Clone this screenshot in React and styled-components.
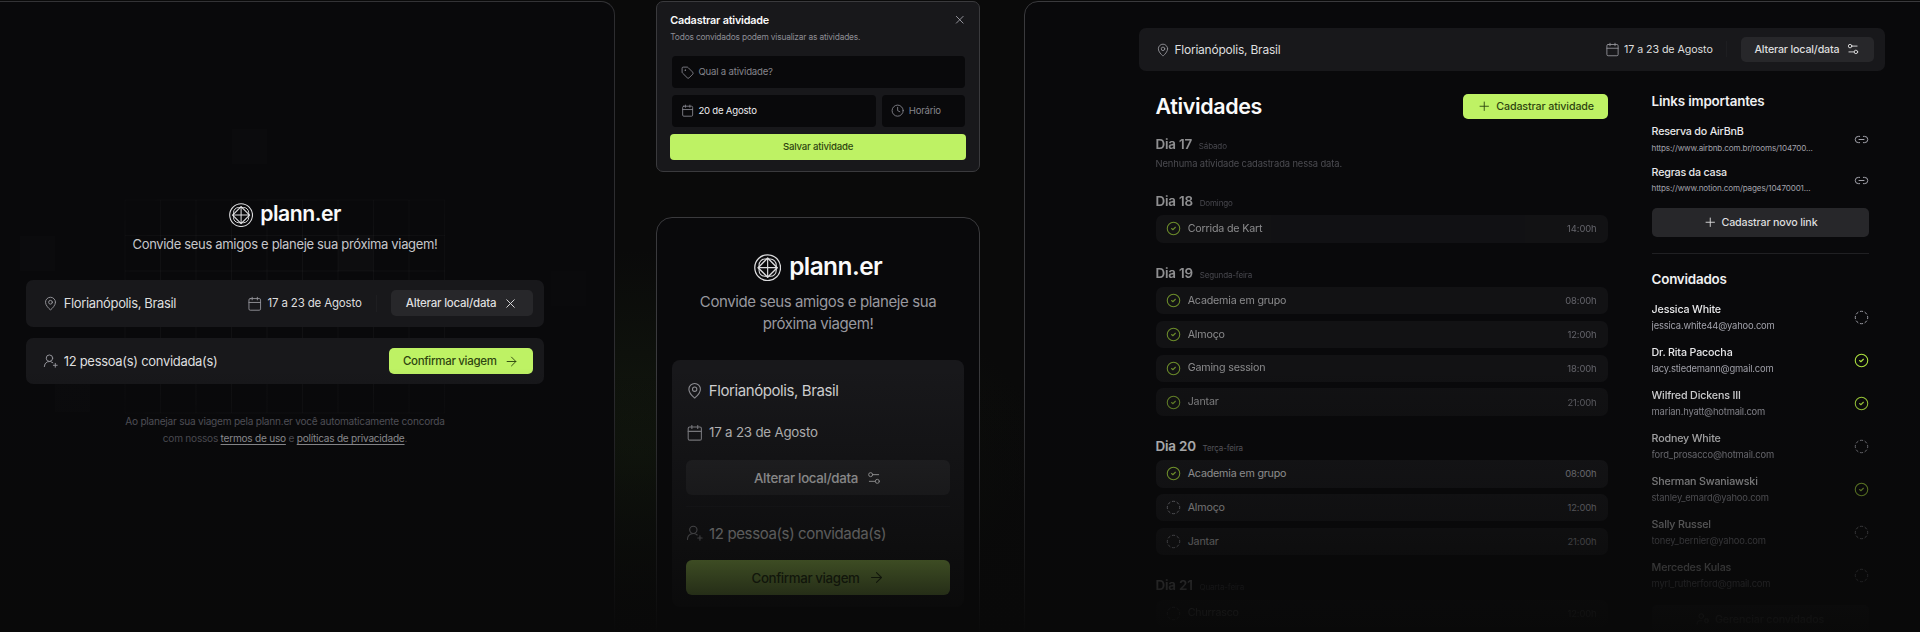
import React from "react";
import styled, { createGlobalStyle, css } from "styled-components";
import {
  ArrowRight,
  Calendar,
  CircleCheck,
  CircleDashed,
  Clock,
  Link2,
  MapPin,
  Plus,
  Settings2,
  Tag,
  UserRoundPlus,
  UserCog,
  X,
} from "lucide-react";

const GlobalStyle = createGlobalStyle`
  * { box-sizing: border-box; }
  body {
    margin: 0;
    background: #0a0a0a;
    font-family: Inter, "Liberation Sans", sans-serif;
    color: #e8e8ea;
    overflow: hidden;
  }
  h1, h2, h3, p { margin: 0; }
  svg { flex: none; display: block; }
`;

/* ---------- shared ---------- */

const type = css`
  font-size: ${(p) => p.$size}px;
  letter-spacing: ${(p) => p.$track ?? -0.02}em;
  white-space: nowrap;
`;

const Page = styled.main`
  position: relative;
  display: flex;
  align-items: flex-start;
  width: 1920px;
  height: 632px;
  overflow: hidden;
  background: radial-gradient(ellipse 400px 205px at 640px 455px, #12180e, #0a0a0a 100%);
`;

const BottomFade = styled.div`
  position: absolute;
  left: 0;
  right: 0;
  top: 368px;
  bottom: 0;
  background: linear-gradient(rgba(9, 9, 9, 0), rgba(9, 9, 9, 0.98));
  pointer-events: none;
`;

const Label = styled.span`
  ${type}
  line-height: 1.3;
  color: ${(p) => p.$color || "#dededf"};
`;

const Field = styled.div`
  display: flex;
  align-items: center;
  gap: ${(p) => p.$gap || 5.5}px;
  color: ${(p) => p.$color || "#96969c"};
`;

const Button = styled.button`
  ${type}
  display: flex;
  align-items: center;
  justify-content: center;
  gap: ${(p) => p.$gap || 7}px;
  height: ${(p) => p.$h}px;
  width: ${(p) => (p.$w ? `${p.$w}px` : "100%")};
  padding: 0;
  border: 0;
  border-radius: ${(p) => p.$radius || 5}px;
  font-family: inherit;
  font-weight: 500;
  background: ${(p) => (p.$primary ? "#bef264" : "#27272a")};
  color: ${(p) => (p.$primary ? "#2e4510" : "#dededf")};
  opacity: ${(p) => (p.$faint ? 0.55 : 1)};
`;

const Split = styled.i`
  width: 1px;
  height: ${(p) => p.$h}px;
  background: #1e1e21;
`;

const Rule = styled.hr`
  width: 100%;
  height: 1px;
  border: 0;
  margin: ${(p) => p.$margin};
  background: ${(p) => p.$color || "#202023"};
`;

/* ---------- brand ---------- */

const BrandRow = styled.div`
  display: flex;
  align-items: center;
  gap: ${(p) => p.$gap}px;
  height: ${(p) => p.$h}px;
`;

const BrandName = styled.h1`
  ${type}
  font-weight: 600;
  line-height: 1;
  margin-bottom: 4px;
  color: #fafafa;
`;

function Brand({ mark, size, gap }) {
  return (
    <BrandRow $gap={gap} $h={mark}>
      <svg width={mark} height={mark} viewBox="0 0 28 28" fill="none" stroke="#dcdcde">
        <circle cx="14" cy="14" r="13.2" strokeWidth="1.3" />
        <rect x="5.2" y="5.2" width="17.6" height="17.6" rx="6" strokeWidth="1.1" />
        <path d="M14 4.2 23.8 14 14 23.8 4.2 14Z" strokeWidth="1.4" strokeLinejoin="round" />
        <path d="M14 4v20M4 14h20" strokeWidth="1.2" />
      </svg>
      <BrandName $size={size} $track={-0.022}>plann.er</BrandName>
    </BrandRow>
  );
}

/* ---------- invite screen ---------- */

const InvitePanel = styled.section`
  position: relative;
  flex: none;
  width: 615px;
  height: 700px;
  margin-top: 1px;
  padding: 201px 70px 0 26px;
  border: 1px solid #2d2d30;
  border-left: 0;
  border-top-color: #333336;
  border-radius: 0 14px 0 0;
  background: #09090b;
`;

const GridArt = styled.svg`
  position: absolute;
  left: 0;
  top: 98px;
`;

const InviteContent = styled.div`
  position: relative;
  display: flex;
  flex-direction: column;
  align-items: center;
`;

const Tagline = styled.p`
  ${type}
  line-height: ${(p) => p.$lh}px;
  margin: ${(p) => p.$margin};
  color: ${(p) => p.$color};
  text-align: center;
`;

const Bar = styled.div`
  display: flex;
  align-items: center;
  width: 100%;
  height: ${(p) => p.$h}px;
  padding: ${(p) => p.$pad};
  border-radius: 7px;
  background: #18181b;
`;

const BarEnd = styled.div`
  display: flex;
  align-items: center;
  gap: ${(p) => p.$gap || 14}px;
  margin-left: auto;
`;

const Bars = styled.div`
  display: flex;
  flex-direction: column;
  gap: 11.3px;
  width: 518.5px;
`;

const Terms = styled.p`
  ${type}
  margin-top: 29px;
  line-height: 16.2px;
  text-align: center;
  color: #5f5f67;
`;

const TermsLink = styled.a`
  color: #b4b4b9;
  text-decoration: underline;
  text-underline-offset: 1.5px;
`;

const cells = [
  [231.5, 29, 0.6],
  [480, 65, 0.25],
  [19.5, 135.5, 0.5],
  [338, 135.5, 1],
  [551, 171, 0.4],
  [55, 277, 0.6],
];

function GridBackdrop() {
  const xs = Array.from({ length: 10 }, (_, i) => 125 + i * 35.5);
  const ys = Array.from({ length: 7 }, (_, i) => 100 + i * 35.5);
  return (
    <GridArt width="614" height="420" viewBox="0 0 614 420">
      <defs>
        <radialGradient id="gridFade" cx="0.46" cy="0.5" r="0.5">
          <stop offset="0" stopColor="#fff" />
          <stop offset="0.5" stopColor="#fff" stopOpacity="0.75" />
          <stop offset="1" stopColor="#fff" stopOpacity="0" />
        </radialGradient>
        <mask id="gridMask">
          <rect width="614" height="420" fill="url(#gridFade)" />
        </mask>
      </defs>
      <g stroke="#fff" strokeOpacity="0.04" mask="url(#gridMask)">
        {xs.map((x) => (
          <path key={x} d={`M${x} 100V313`} />
        ))}
        {ys.map((y) => (
          <path key={y} d={`M125 ${y}H445`} />
        ))}
      </g>
      {cells.map(([x, y, o]) => (
        <rect key={`${x}-${y}`} x={x} y={y} width="35.5" height="35.5" fill="#fff" fillOpacity={0.02 * o} />
      ))}
    </GridArt>
  );
}

function InviteScreen() {
  return (
    <InvitePanel>
      <GridBackdrop />
      <InviteContent>
        <Brand mark={24.2} size={21.2} gap={7} />
        <Tagline $size={13} $track={-0.0254} $lh={20} $margin="7.3px 0 25.7px" $color="#c6c6ca">
          Convide seus amigos e planeje sua próxima viagem!
        </Tagline>
        <Bars>
          <Bar $h={46.5} $pad="0 11.5px 0 17.5px">
            <Field>
              <MapPin size={15} strokeWidth={1.5} />
              <Label $size={13} $track={-0.0275}>Florianópolis, Brasil</Label>
            </Field>
            <BarEnd $gap={14.3}>
              <Field $gap={4.7}>
                <Calendar size={15.5} strokeWidth={1.4} />
                <Label $size={11.5} $track={-0.0146}>17 a 23 de Agosto</Label>
              </Field>
              <Split $h={17} />
              <Button $size={11.5} $h={26} $w={141.5}>
                Alterar local/data
                <X size={15} strokeWidth={1.5} />
              </Button>
            </BarEnd>
          </Bar>
          <Bar $h={46.5} $pad="0 11.5px 0 17.5px">
            <Field $gap={5}>
              <UserRoundPlus size={15.5} strokeWidth={1.5} />
              <Label $size={13} $track={-0.0234}>12 pessoa(s) convidada(s)</Label>
            </Field>
            <BarEnd>
              <Button $primary $size={11.5} $track={-0.0265} $h={26} $w={144}>
                Confirmar viagem
                <ArrowRight size={15} strokeWidth={1.5} />
              </Button>
            </BarEnd>
          </Bar>
        </Bars>
        <Terms $size={10.1} $track={-0.0235}>
          Ao planejar sua viagem pela plann.er você automaticamente concorda
          <br />
          com nossos <TermsLink>termos de uso</TermsLink> e <TermsLink>políticas de privacidade</TermsLink>.
        </Terms>
      </InviteContent>
    </InvitePanel>
  );
}

/* ---------- activity modal and mobile screen ---------- */

const CenterColumn = styled.div`
  flex: none;
  display: flex;
  flex-direction: column;
  gap: 45.7px;
  width: 324px;
  margin: 1px 44px 0 41px;
`;

const Modal = styled.section`
  height: 170.8px;
  padding: 10.2px 13px 0 13.3px;
  border: 1px solid #3a3a3d;
  border-radius: 7px;
  background: #18181b;
`;

const ModalHead = styled.header`
  display: flex;
  align-items: center;
  justify-content: space-between;
  height: 16px;
  color: #a1a1aa;
`;

const ModalTitle = styled.h2`
  ${type}
  font-weight: 600;
  color: #fafafa;
`;

const ModalNote = styled.p`
  ${type}
  line-height: 14px;
  margin: 2px 0 12.2px;
  color: #8d8d94;
`;

const InputRow = styled.div`
  display: flex;
  gap: 6.7px;
  margin: 0 1.5px 7px;
`;

const Input = styled.div`
  display: flex;
  align-items: center;
  gap: 4.3px;
  flex: ${(p) => (p.$w ? "none" : 1)};
  width: ${(p) => (p.$w ? `${p.$w}px` : "auto")};
  height: 31.8px;
  padding: 0 9px;
  border-radius: 4px;
  background: #09090b;
  color: #85858c;
`;

function ActivityModal() {
  return (
    <Modal>
      <ModalHead>
        <ModalTitle $size={10.8} $track={-0.0175}>Cadastrar atividade</ModalTitle>
        <X size={13.5} strokeWidth={1.6} />
      </ModalHead>
      <ModalNote $size={8.4} $track={-0.0217}>Todos convidados podem visualizar as atividades.</ModalNote>
      <InputRow>
        <Input>
          <Tag size={13.3} strokeWidth={1.6} />
          <Label $size={9.6} $color="#85858c">Qual a atividade?</Label>
        </Input>
      </InputRow>
      <InputRow>
        <Input>
          <Calendar size={13.3} strokeWidth={1.6} />
          <Label $size={9.6} $track={-0.0225} $color="#ececee">20 de Agosto</Label>
        </Input>
        <Input $w={82.3}>
          <Clock size={13.3} strokeWidth={1.6} />
          <Label $size={9.6} $track={-0.0256} $color="#85858c">Horário</Label>
        </Input>
      </InputRow>
      <Button $primary $size={9.6} $h={26} $radius={4}>Salvar atividade</Button>
    </Modal>
  );
}

const MobilePanel = styled.section`
  height: 500px;
  padding: 35.7px 15px 0;
  display: flex;
  flex-direction: column;
  align-items: center;
  border: 1px solid #3a3a3d;
  border-radius: 16px;
  background: #09090b;
`;

const MobileCard = styled.div`
  width: 291.5px;
  height: 247px;
  padding: 9.5px 13.7px 0;
  border-radius: 8px;
  background: #18181b;
`;

const MobileRow = styled(Field)`
  height: 42px;
`;

function MobileScreen() {
  return (
    <MobilePanel>
      <Brand mark={27.3} size={24.4} gap={8} />
      <Tagline $size={15} $track={-0.0269} $lh={21.7} $margin="9.4px 0 26px" $color="#98989f">
        Convide seus amigos e planeje sua
        <br />
        próxima viagem!
      </Tagline>
      <MobileCard>
        <MobileRow>
          <MapPin size={17.3} strokeWidth={1.5} />
          <Label $size={15} $track={-0.0271}>Florianópolis, Brasil</Label>
        </MobileRow>
        <MobileRow>
          <Calendar size={17.6} strokeWidth={1.5} />
          <Label $size={13.3} $track={-0.015}>17 a 23 de Agosto</Label>
        </MobileRow>
        <Rule $margin="5.5px 0 0" $color="transparent" />
        <Button $size={13.3} $track={-0.0226} $h={35} $radius={6} $gap={8}>
          Alterar local/data
          <Settings2 size={16} strokeWidth={1.5} />
        </Button>
        <Rule $margin="11px 0 5px" $color="#1f1f22" />
        <MobileRow>
          <UserRoundPlus size={17.6} strokeWidth={1.5} />
          <Label $size={15} $track={-0.0246}>12 pessoa(s) convidada(s)</Label>
        </MobileRow>
        <Rule $margin="5px 0 0" $color="transparent" />
        <Button $primary $size={13.3} $track={-0.0281} $h={35} $radius={6} $gap={8}>
          Confirmar viagem
          <ArrowRight size={17} strokeWidth={1.5} />
        </Button>
      </MobileCard>
    </MobilePanel>
  );
}

/* ---------- trip details screen ---------- */

const TripPanel = styled.section`
  flex: none;
  width: 976px;
  height: 700px;
  margin-top: 1px;
  padding: 26px 0 0 114.2px;
  border: 1px solid #3a3a3d;
  border-radius: 14px;
  background: #09090b;
`;

const TripHeader = styled.div`
  width: 745.6px;
`;

const TripBody = styled.div`
  display: flex;
  gap: 43.2px;
  padding: 0 0 0 16.4px;
`;

const Main = styled.div`
  width: 452.8px;
  padding-top: 22.8px;
`;

const TitleRow = styled.div`
  display: flex;
  align-items: center;
  justify-content: space-between;
  height: 25px;
  margin-bottom: 16.3px;
`;

const Title = styled.h1`
  ${type}
  font-weight: 600;
  line-height: 25px;
  color: #fafafa;
`;

const Day = styled.section`
  margin-bottom: 21.1px;
  opacity: ${(p) => (p.$past ? 0.6 : 1)};
`;

const DayHead = styled.header`
  display: flex;
  align-items: baseline;
  gap: 6.8px;
  height: 18.7px;
  margin-bottom: 4.6px;
  line-height: 18.7px;
`;

const DayName = styled.h2`
  ${type}
  font-weight: 600;
  line-height: 18.7px;
`;

const EmptyNote = styled.p`
  ${type}
  line-height: 12.3px;
  color: #76767e;
`;

const Activities = styled.div`
  display: flex;
  flex-direction: column;
  gap: 6.3px;
`;

const ActivityRow = styled.div`
  display: flex;
  align-items: center;
  gap: 6.7px;
  height: 27.5px;
  padding: 0 11.8px 0 10.4px;
  border-radius: 7px;
  background: #18181b;
`;

const Time = styled.time`
  ${type}
  margin-left: auto;
  color: #a1a1aa;
`;

function Status({ done }) {
  return done ? (
    <CircleCheck size={15} strokeWidth={1.7} color="#aee33f" />
  ) : (
    <CircleDashed size={15} strokeWidth={1.5} color="#a1a1aa" />
  );
}

const days = [
  { name: "Dia 17", weekday: "Sábado", past: true, items: [] },
  { name: "Dia 18", weekday: "Domingo", past: true, items: [["Corrida de Kart", "14:00h", true]] },
  {
    name: "Dia 19",
    weekday: "Segunda-feira",
    past: true,
    items: [
      ["Academia em grupo", "08:00h", true],
      ["Almoço", "12:00h", true],
      ["Gaming session", "18:00h", true],
      ["Jantar", "21:00h", true],
    ],
  },
  {
    name: "Dia 20",
    weekday: "Terça-feira",
    items: [
      ["Academia em grupo", "08:00h", true],
      ["Almoço", "12:00h", false],
      ["Jantar", "21:00h", false],
    ],
  },
  { name: "Dia 21", weekday: "Quarta-feira", past: true, items: [["Churrasco", "12:00h", false]] },
];

const Aside = styled.aside`
  width: 217px;
  padding-top: 21.2px;
`;

const AsideTitle = styled.h2`
  ${type}
  font-weight: 600;
  line-height: 18.7px;
  margin-bottom: 14.4px;
  color: #f0f0f1;
`;

const Entries = styled.div`
  display: flex;
  flex-direction: column;
  gap: ${(p) => p.$gap}px;
  margin-bottom: 13.8px;
  ${(p) => p.$fade && "mask-image: linear-gradient(#000 20%, rgba(0, 0, 0, 0.72));"}
`;

const Entry = styled.div`
  display: flex;
  align-items: center;
  justify-content: space-between;
  height: ${(p) => p.$h}px;
  color: #a1a1aa;
`;

const EntryText = styled.div`
  display: flex;
  flex-direction: column;
  gap: 2.5px;
`;

const EntryName = styled.h3`
  ${type}
  font-weight: 500;
  line-height: 14px;
  color: #e8e8ea;
`;

const EntryDetail = styled.p`
  ${type}
  line-height: ${(p) => p.$lh}px;
  color: #a1a1aa;
`;

const links = [
  ["Reserva do AirBnB", "https://www.airbnb.com.br/rooms/104700..."],
  ["Regras da casa", "https://www.notion.com/pages/10470001..."],
];

const guests = [
  ["Jessica White", "jessica.white44@yahoo.com", false],
  ["Dr. Rita Pacocha", "lacy.stiedemann@gmail.com", true],
  ["Wilfred Dickens III", "marian.hyatt@hotmail.com", true],
  ["Rodney White", "ford_prosacco@hotmail.com", false],
  ["Sherman Swaniawski", "stanley_emard@yahoo.com", true],
  ["Sally Russel", "toney_bernier@yahoo.com", false],
  ["Mercedes Kulas", "myrl_rutherford@gmail.com", false],
];

function TripScreen() {
  return (
    <TripPanel>
      <TripHeader>
        <Bar $h={43} $pad="0 11px 0 16.5px">
          <Field $gap={4.7}>
            <MapPin size={14} strokeWidth={1.5} />
            <Label $size={12} $track={-0.018}>Florianópolis, Brasil</Label>
          </Field>
          <BarEnd $gap={13.7}>
            <Field $gap={4.2}>
              <Calendar size={15} strokeWidth={1.4} />
              <Label $size={10.7} $track={-0.0077}>17 a 23 de Agosto</Label>
            </Field>
            <Split $h={16} />
            <Button $size={10.7} $track={-0.0153} $h={24.8} $w={132.7}>
              Alterar local/data
              <Settings2 size={14} strokeWidth={1.6} />
            </Button>
          </BarEnd>
        </Bar>
      </TripHeader>
      <TripBody>
        <Main>
          <TitleRow>
            <Title $size={21.5} $track={-0.0181}>Atividades</Title>
            <Button $primary $size={10.7} $track={-0.0105} $h={25} $w={145.3} $gap={4.3}>
              <Plus size={14.5} strokeWidth={1.5} />
              Cadastrar atividade
            </Button>
          </TitleRow>
          {days.map((day) => (
            <Day key={day.name} $past={day.past}>
              <DayHead>
                <DayName $size={13.4} $track={-0.0152}>{day.name}</DayName>
                <Label $size={8} $track={-0.016} $color="#71717a">{day.weekday}</Label>
              </DayHead>
              {day.items.length === 0 && (
                <EmptyNote $size={9.4} $track={-0.0131}>Nenhuma atividade cadastrada nessa data.</EmptyNote>
              )}
              <Activities>
                {day.items.map(([name, time, done]) => (
                  <ActivityRow key={name}>
                    <Status done={done} />
                    <Label $size={10.7} $track={-0.017}>{name}</Label>
                    <Time $size={9.4} $track={-0.008}>{time}</Time>
                  </ActivityRow>
                ))}
              </Activities>
            </Day>
          ))}
        </Main>
        <Aside>
          <AsideTitle $size={13.4} $track={-0.0123}>Links importantes</AsideTitle>
          <Entries $gap={11.7}>
            {links.map(([name, url]) => (
              <Entry key={name} $h={28.7}>
                <EntryText>
                  <EntryName $size={10.7} $track={-0.0186}>{name}</EntryName>
                  <EntryDetail $size={8.1} $track={-0.0184} $lh={12}>{url}</EntryDetail>
                </EntryText>
                <Link2 size={15} strokeWidth={1.6} />
              </Entry>
            ))}
          </Entries>
          <Button $size={10.7} $track={-0.0139} $h={28.7} $gap={4.3}>
            <Plus size={14.5} strokeWidth={1.5} />
            Cadastrar novo link
          </Button>
          <Rule $margin="16px 0 15.7px" />
          <AsideTitle $size={13.4} $track={-0.0169}>Convidados</AsideTitle>
          <Entries $gap={12.5} $fade>
            {guests.map(([name, email, confirmed]) => (
              <Entry key={name} $h={30.5}>
                <EntryText>
                  <EntryName $size={10.7} $track={-0.015}>{name}</EntryName>
                  <EntryDetail $size={9.4} $track={-0.0195} $lh={14}>{email}</EntryDetail>
                </EntryText>
                <Status done={confirmed} />
              </Entry>
            ))}
          </Entries>
          <Button $faint $size={10.7} $track={-0.0139} $h={28.7} $gap={5}>
            <UserCog size={14} strokeWidth={1.5} />
            Gerenciar convidados
          </Button>
        </Aside>
      </TripBody>
    </TripPanel>
  );
}

export default function App() {
  return (
    <>
      <GlobalStyle />
      <Page>
        <InviteScreen />
        <CenterColumn>
          <ActivityModal />
          <MobileScreen />
        </CenterColumn>
        <TripScreen />
        <BottomFade />
      </Page>
    </>
  );
}
